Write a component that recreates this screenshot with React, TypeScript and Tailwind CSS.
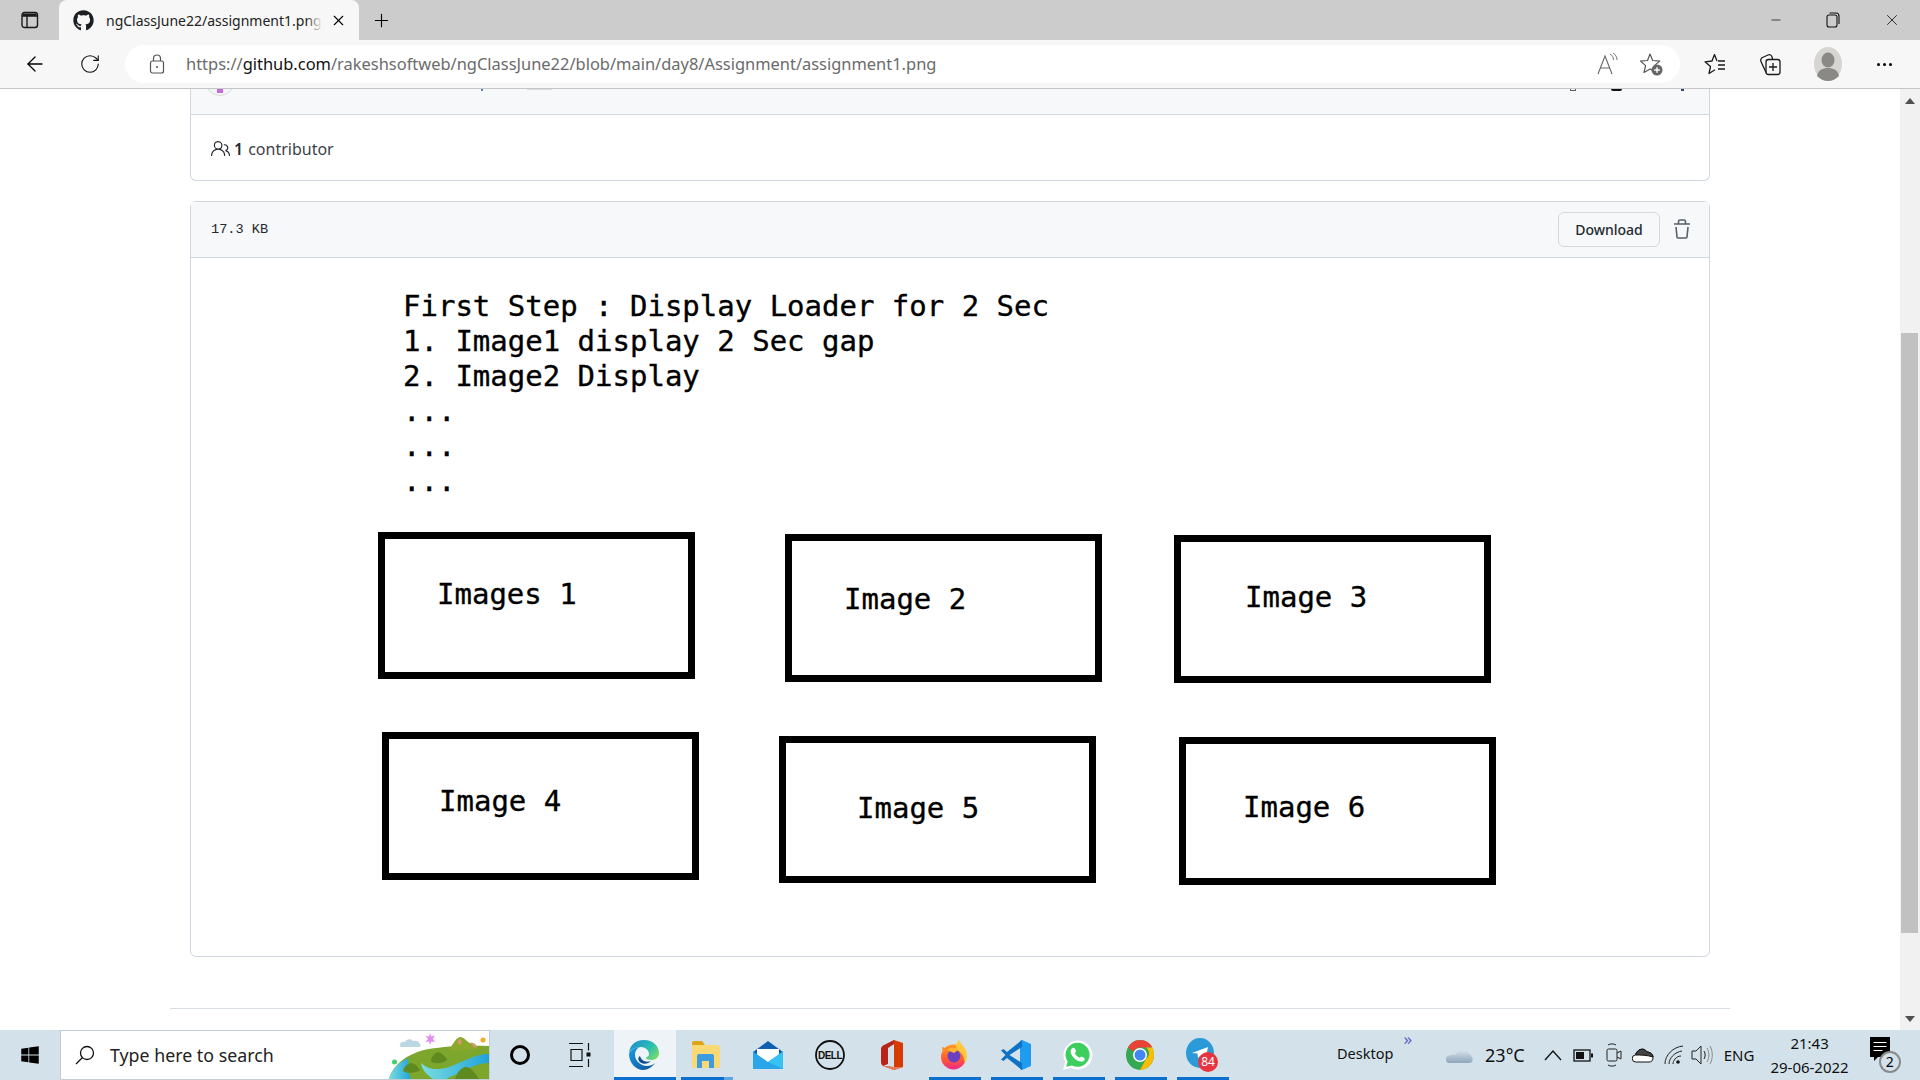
import { ArrowLeft, Minus, Plus, RotateCw, X } from "lucide-react";
import { FaGithub, FaWindows } from "react-icons/fa";
import { GoPeople } from "react-icons/go";

const ui = "font-['Noto_Sans','Open_Sans',sans-serif]";
const sketch = "font-['DejaVu_Sans_Mono',monospace] text-[29px] leading-[35px] text-black whitespace-pre [-webkit-text-stroke:0.35px_black]";

const boxes = [
  { label: "Images 1", place: "left-[187px] top-[274px] h-[147px] w-[317px] pl-[52px] pt-[38px]" },
  { label: "Image 2", place: "left-[594px] top-[276px] h-[148px] w-[317px] pl-[52px] pt-[41px]" },
  { label: "Image 3", place: "left-[983px] top-[277px] h-[148px] w-[317px] pl-[64px] pt-[38px]" },
  { label: "Image 4", place: "left-[191px] top-[474px] h-[148px] w-[317px] pl-[50px] pt-[45px]" },
  { label: "Image 5", place: "left-[588px] top-[478px] h-[147px] w-[317px] pl-[71px] pt-[48px]" },
  { label: "Image 6", place: "left-[988px] top-[479px] h-[148px] w-[317px] pl-[57px] pt-[46px]" },
];

function TabActionsIcon() {
  return (
    <svg width="18" height="18" viewBox="0 0 18 18" fill="none">
      <rect x="1" y="1.5" width="15.5" height="15" rx="2.5" stroke="#1a1a1a" strokeWidth="1.4" />
      <path d="M1 5h15.5M6 5v11" stroke="#1a1a1a" strokeWidth="1.4" />
      <path d="M2 2.5h13.5V5H2z" fill="#1a1a1a" />
    </svg>
  );
}

function LockIcon() {
  return (
    <svg width="16" height="20" viewBox="0 0 16 20" fill="none" stroke="#555" strokeWidth="1.2">
      <rect x="1.5" y="7" width="13" height="12" rx="2" />
      <path d="M4.5 7V4.5a3.5 3.5 0 0 1 7 0V7" />
      <circle cx="8" cy="13" r="1" fill="#555" stroke="none" />
    </svg>
  );
}

function ReadAloudIcon() {
  return (
    <svg width="22" height="22" viewBox="0 0 22 22" fill="none" stroke="#666" strokeWidth="1.1">
      <path d="M1 21 8 3l7 18M3.5 15h9" />
      <path d="M13 1c2 1 3.5 3 3.5 6M16 0c2.5 1.5 4 4 4 7" strokeWidth="0.9" />
    </svg>
  );
}

function StarPlusIcon() {
  return (
    <svg width="24" height="24" viewBox="0 0 24 24" fill="none">
      <path d="M10 2l2.7 6.5 7 .6-5.300 4.500 1.600 6.900-6-3.500-6 3.500 1.600-6.900L.5 9.100l7-.6z" stroke="#555" strokeWidth="1.2" strokeLinejoin="round" />
      <circle cx="17" cy="18" r="5.5" fill="#666" />
      <path d="M17 15.2v5.600M14.2 18h5.600" stroke="#fff" strokeWidth="1.4" />
    </svg>
  );
}

function FavoritesIcon() {
  return (
    <svg width="22" height="22" viewBox="0 0 22 22" fill="none" stroke="#1a1a1a" strokeWidth="1.3" strokeLinejoin="round">
      <path d="M11 16.8 5 20.500l1.500-7L1 8.800 8 8l2.500-6.500L13 8" />
      <path d="M14 8h7M14 12h7M14 16h7" />
    </svg>
  );
}

function CollectionsIcon() {
  return (
    <svg width="22" height="24" viewBox="0 0 22 24" fill="none" stroke="#1a1a1a" strokeWidth="1.3">
      <rect x="7" y="7.5" width="14" height="15" rx="2.5" />
      <path d="M14 11v8M10 15h8" />
      <path d="M7 20.5 2 9.500a3 3 0 0 1 1.500-4L9 3c2-.8 3.500.2 4 2l.6 2.500" />
    </svg>
  );
}

function ProfileIcon() {
  return (
    <svg width="28" height="34" viewBox="0 0 28 34">
      <ellipse cx="14" cy="17" rx="14" ry="17" fill="#d6d5d2" />
      <ellipse cx="14" cy="13" rx="6.5" ry="7.5" fill="#8a8986" />
      <path d="M3 29c1-6 6-8 11-8s10 2 11 8c-3 3-7 5-11 5s-8-2-11-5z" fill="#8a8986" />
    </svg>
  );
}

function TrashIcon() {
  return (
    <svg width="16" height="20" viewBox="0 0 16 20" fill="none" stroke="#57606a" strokeWidth="1.6">
      <path d="M0 5h16M4.5 4.500V2.500A1.500 1.500 0 0 1 6 1h4a1.500 1.500 0 0 1 1.500 1.500v2" />
      <path d="M2 8l1 10a1 1 0 0 0 1 1h8a1 1 0 0 0 1-1l1-10" />
    </svg>
  );
}

function SearchIcon() {
  return (
    <svg width="20" height="20" viewBox="0 0 20 20" fill="none" stroke="#111" strokeWidth="1.3">
      <circle cx="12" cy="8" r="6.5" />
      <path d="M7.5 12.500 1 19" />
    </svg>
  );
}

function Landscape() {
  return (
    <svg width="100" height="48" viewBox="0 0 100 48" className="shrink-0">
      <defs>
        <linearGradient id="riverGrad" x1="0" y1="0" x2="1" y2="0">
          <stop offset="0" stopColor="#7bdde0" />
          <stop offset="1" stopColor="#1fa3d8" />
        </linearGradient>
      </defs>
      <path d="M11 14c0-3 3-4 5-3 1-3 6-4 8-1 3-1 6 0 7 3 1 1 1 3-1 3H13c-2 0-3-1-2-2z" fill="#bcd6e4" />
      <path d="M41 2l1.500 3.500 3.500-1-2 3.500 2 3-3.500-.5L41 14l-1-3.500-3.500.5L39 8l-2.500-3 3.500.5z" fill="#e58ef0" />
      <circle cx="94" cy="9" r="2.5" fill="#fba91c" />
      <circle cx="5.5" cy="31" r="2.5" fill="#3fd06f" />
      <path d="M0 48c4-14 18-26 40-30 16-3 40-4 60-3v33z" fill="#7da62d" />
      <path d="M0 48c3-10 10-17 20-21-2 7-1 14 2 21z" fill="url(#riverGrad)" />
      <path d="M32 32c6 6 16 8 28 4 14-5 26-13 40-13v9c-12 0-22 6-32 11-7 3-8 3-10 5H44c-6-4-11-9-12-16z" fill="url(#riverGrad)" />
      <path d="M60 18c3-2 6-11 11-12 4 0 6 4 10 6l5 1 4 5c-8 1-24 3-30 0z" fill="#8aa82b" />
      <path d="M70 8c2-1 3 3 2 6l-4-2zM82 11l4 2 2 4-4-1z" fill="#d59a6a" />
      <path d="M42 30c0-3 3-8 7-9 3 1 8 4 9 8-3 3-12 5-16 1zM14 40c1-4 5-8 8-8 4 0 7 4 9 7-3 3-13 4-17 1zM66 48c2-6 6-12 11-12s9 6 13 12z" fill="#5f8a1f" />
    </svg>
  );
}

function TaskViewIcon() {
  return (
    <svg width="22" height="24" viewBox="0 0 22 24" fill="none" stroke="#111" strokeWidth="1.2">
      <path d="M0 .5h14M0 23.500h14M2 6.500h11v11H2zM19.500 0v7.500M19.500 16v8" />
      <rect x="17.5" y="9.5" width="4" height="4" fill="#111" stroke="none" />
    </svg>
  );
}

function EdgeIcon() {
  return (
    <svg width="32" height="32" viewBox="0 0 32 32">
      <defs>
        <linearGradient id="edgeTop" x1="0" y1="0.2" x2="1" y2="0.8">
          <stop offset="0" stopColor="#1d8fd0" />
          <stop offset="0.6" stopColor="#2bc0b0" />
          <stop offset="1" stopColor="#7fdc63" />
        </linearGradient>
        <linearGradient id="edgeLow" x1="0" y1="0" x2="1" y2="1">
          <stop offset="0" stopColor="#1b9de2" />
          <stop offset="1" stopColor="#0c4f9c" />
        </linearGradient>
      </defs>
      <path d="M1 15C1 7 7 1 16 1c9 0 15 6 15 13 0 4-3 7-7 7-3 0-6-1-6-2 0-1 3-1 3-4 0-4-4-7-8-7C7 8 1 11 1 15z" fill="url(#edgeTop)" />
      <path d="M1 15c1-4 6-7 11-7-3 1-5 4-5 8 0 6 6 11 12 11 3 0 6-1 8-3-3 4-7 7-12 7C8 31 1 24 1 15z" fill="url(#edgeLow)" />
      <path d="M12 17c1 4 5 7 11 5-3 3-9 4-12 0-1-2-1-4 1-5z" fill="#0b4a95" />
    </svg>
  );
}

function FilesIcon() {
  return (
    <svg width="28" height="28" viewBox="0 0 28 28">
      <path d="M0 2a2 2 0 0 1 2-2h8l3 4H0z" fill="#dba419" />
      <path d="M0 4h25a3 3 0 0 1 3 3v18a2 2 0 0 1-2 2H2a2 2 0 0 1-2-2z" fill="#fad974" />
      <path d="M5 27V15a2 2 0 0 1 2-2h13a2 2 0 0 1 2 2v12h-5v-7h-7v7z" fill="#3d9ce0" />
    </svg>
  );
}

function MailIcon() {
  return (
    <svg width="30" height="28" viewBox="0 0 30 28">
      <path d="M15 0 30 11v5H0v-5z" fill="#0f5fb0" />
      <path d="M4 8h22v10L15 24 4 18z" fill="#fff" />
      <path d="M0 10.5 15 21 30 10.500V28H0z" fill="#2aa5e8" />
      <path d="M15 21 30 10.500V28z" fill="#36c2f5" />
    </svg>
  );
}

function DellIcon() {
  return (
    <svg width="30" height="30" viewBox="0 0 30 30">
      <circle cx="15" cy="15" r="14" fill="none" stroke="#111" strokeWidth="1.8" />
      <text x="15" y="18.5" textAnchor="middle" fontFamily="Liberation Sans" fontWeight="700" fontSize="10" letterSpacing="-0.5" fill="#111">DELL</text>
    </svg>
  );
}

function OfficeIcon() {
  return (
    <svg width="22" height="30" viewBox="0 0 22 30">
      <path d="M13 0 22 3v24l-9 3-11-4 11 1V4L6 7z" fill="#d83b01" />
      <path d="M13 0 3 5c-2 1-3 2-3 4v13c0 2 1 3 2 4l5-2V8l6-4z" fill="#b7251a" />
      <path d="M2 26 13 30l9-3-9 0z" fill="#e8795a" />
    </svg>
  );
}

function FirefoxIcon() {
  return (
    <svg width="30" height="30" viewBox="0 0 30 30">
      <defs>
        <linearGradient id="foxBody" x1="0.5" y1="0" x2="0.5" y2="1">
          <stop offset="0" stopColor="#ff9a1f" />
          <stop offset="0.6" stopColor="#ff5a34" />
          <stop offset="1" stopColor="#f0268c" />
        </linearGradient>
      </defs>
      <circle cx="14.5" cy="17" r="12.5" fill="url(#foxBody)" />
      <path d="M20 0c1 4 8 7 8 16 0 3-1 5-2 7-1-5-2-9-6-12-2-1-3-3-3-5 0-3 2-4 3-6z" fill="#ffc83d" />
      <path d="M3 7l1 6 6-4z" fill="#ff8a1f" />
      <circle cx="15" cy="16" r="6.5" fill="#6a3fc0" />
      <path d="M8 10c3-3 8-3 11 0l-4 3z" fill="#ffb52e" />
    </svg>
  );
}

function VsCodeIcon() {
  return (
    <svg width="30" height="30" viewBox="0 0 30 30">
      <path d="M21 0 30 4v22l-9 4-2-1V1z" fill="#1f9cf0" />
      <path d="M21 0v7L8.500 15 21 23v7L6 18l-3.500 3L0 19.500 4.500 15 0 10.500 2.500 9 6 12z" fill="#0f72c4" />
    </svg>
  );
}

function WhatsAppIcon() {
  return (
    <svg width="30" height="30" viewBox="0 0 30 30">
      <path d="M0 30l2.200-8A14.500 14.500 0 1 1 8 27.800z" fill="#fff" />
      <path d="M3.200 26.800l1.500-5.200A12 12 0 1 1 9 25.400z" fill="#3ccf5e" />
      <path d="M10.500 8c.8 0 1.200 0 1.500.8l1 2.500c.2.500-.8 1.500-1.200 2 1 2 3 3.800 5 4.700.5-.5 1.300-1.600 1.800-1.400l2.600 1.300c.6.300.6.800.4 1.500-.4 1.500-2 2.300-3.500 2.200-5.500-.8-9.500-5-10.500-9.600-.2-1.800.8-4 2.900-4.500z" fill="#fff" />
    </svg>
  );
}

function ChromeIcon() {
  return (
    <svg width="28" height="30" viewBox="0 0 28 30">
      <ellipse cx="14" cy="15" rx="14" ry="15" fill="#34a853" />
      <path d="M2 7.500C4.500 3 9 0 14 0c5.500 0 10.500 3 12.500 7.500H14a7 7 0 0 0-6.500 4z" fill="#ea4335" />
      <path d="M26.500 7.500C27.500 9.500 28 12 28 15c0 8-6 15-14 15l6-11a7 7 0 0 0 0-11.500z" fill="#fbbc04" />
      <circle cx="14" cy="15" r="7" fill="#fff" />
      <circle cx="14" cy="15" r="5.5" fill="#4285f4" />
    </svg>
  );
}

function TelegramIcon() {
  return (
    <div className="relative h-[34px] w-[32px]">
      <svg width="28" height="30" viewBox="0 0 28 30" className="absolute left-0 top-0">
        <ellipse cx="14" cy="15" rx="14" ry="15" fill="#2a9bd8" />
        <path d="M6 15 22 9l-2.500 12-5-3.500-2.500 2.500-.5-4.500z" fill="#fff" />
      </svg>
      <span className="absolute right-0 bottom-0 flex h-[20px] w-[20px] items-center justify-center rounded-full bg-[#e9343f] font-['Noto_Sans',sans-serif] text-[12px] leading-none text-white">84</span>
    </div>
  );
}

function WeatherCloud() {
  return (
    <svg width="27" height="17" viewBox="0 0 28 18">
      <defs>
        <linearGradient id="cloudGrad" x1="0" y1="0" x2="0" y2="1">
          <stop offset="0" stopColor="#d3dfe8" />
          <stop offset="1" stopColor="#8ea6bb" />
        </linearGradient>
      </defs>
      <path d="M4 17a4 4 0 0 1-1-8c2-1 5-1 7-1 2-5 10-6 13-2 3 2 5 5 5 7 0 3-2 4-4 4z" fill="url(#cloudGrad)" />
    </svg>
  );
}

function TrayIcons() {
  return (
    <>
      <svg width="18" height="12" viewBox="0 0 18 12" fill="none" stroke="#111" strokeWidth="1.3" className="ml-[19px]"><path d="M1 11 9 2l8 9" /></svg>
      <svg width="20" height="13" viewBox="0 0 20 13" fill="none" className="ml-[11px]"><rect x="1" y="1" width="16" height="11" stroke="#111" strokeWidth="1.3" /><rect x="3" y="3" width="8" height="7" fill="#111" /><rect x="18" y="4.5" width="2" height="4" fill="#111" /></svg>
      <svg width="16" height="24" viewBox="0 0 16 24" fill="none" stroke="#222" strokeWidth="1" className="ml-[13px]"><path d="M2 2c2-1.500 6-1.500 8 0M2 22c2 1.500 6 1.500 8 0" /><rect x="1" y="6" width="10" height="12" rx="1.5" /><path d="M11 10l4-2v8l-4-2" /></svg>
      <svg width="22" height="16" viewBox="0 0 22 16" fill="#444" stroke="#111" strokeWidth="1" className="ml-[10px]"><path d="M4 15a3.500 3.500 0 0 1-.5-7C5 2 12 0 15 5c3 0 6 2 6 6 0 3-2 4-4 4z" fill="#fff" /><path d="M3.500 8C5 2 12 0 15 5c3 0 6 2 6 5-6-2-12-2-17.500-2z" /></svg>
      <svg width="20" height="20" viewBox="0 0 20 20" fill="none" stroke="#222" strokeWidth="1" className="ml-[10px]"><path d="M1 19C1 10 9 2 19 1M5 19c0-6 6-12 13-13M9 19c0-3 3-8 8-8" /><circle cx="14" cy="17" r="1.8" fill="#111" stroke="none" /></svg>
      <svg width="22" height="22" viewBox="0 0 22 22" fill="none" stroke="#222" strokeWidth="1" className="ml-[7px]"><path d="M1 7h4l5-5v18l-5-5H1z" /><path d="M13 7c1.500 2.500 1.500 5.500 0 8" /><path d="M16 4c2.500 4 2.500 10 0 14M19 2c3 5 3 13 0 18" stroke="#888" /></svg>
    </>
  );
}

function NotificationIcon() {
  return (
    <div className="relative h-[36px] w-[32px]">
      <svg width="20" height="24" viewBox="0 0 20 24" className="absolute left-0 top-0">
        <path d="M0 0h20v20H8l-4 4v-4H0z" fill="#000" />
        <path d="M3.500 5.500h13M3.500 9.500h13M3.500 13.500h9" stroke="#fff" strokeWidth="1.2" />
      </svg>
      <span className="absolute bottom-0 right-[1px] flex h-[22px] w-[22px] items-center justify-center rounded-full border-2 border-[#8a8a8a] bg-[#d3e2ea] font-['Noto_Sans',sans-serif] text-[14px] leading-none text-black">2</span>
    </div>
  );
}

function TaskbarApp({ children, active, running, more, inset = "pr-[2px]" }: { children: React.ReactNode; active?: boolean; running?: boolean; more?: boolean; inset?: string }) {
  return (
    <div className={`relative flex h-full w-[62px] items-center justify-center ${inset} ${active ? "bg-[#edf3f6]" : ""}`}>
      {children}
      {running && (
        <div className="absolute bottom-0 left-[5px] right-[5px] flex h-[3px]">
          <div className="flex-1 bg-[#0a6fcf]" />
          {more && <div className="w-[9px] bg-[#5fa5e2]" />}
        </div>
      )}
      {active && <div className="absolute bottom-0 left-0 right-0 h-[3px] bg-[#0a6fcf]" />}
    </div>
  );
}

export default function App() {
  return (
    <div className={`flex h-screen w-full flex-col overflow-hidden bg-white ${ui}`}>
      {/* browser frame */}
      <div className="flex h-[40px] shrink-0 items-stretch bg-[#cccccc]">
        <div className="flex w-[59px] items-center justify-center">
          <TabActionsIcon />
        </div>
        <div className="flex w-[300px] items-center rounded-t-[8px] bg-[#f7f7f7] pl-[14px]">
          <FaGithub className="text-[21px] text-[#1b1f23]" />
          <div className="relative ml-[12px] w-[216px] overflow-hidden whitespace-nowrap text-[14px] text-[#222]">
            ngClassJune22/assignment1.png
            <div className="absolute inset-y-0 right-0 w-[16px] bg-gradient-to-r from-transparent to-[#f7f7f7]" />
          </div>
          <X size={17} strokeWidth={1.6} className="ml-[8px] text-black" />
        </div>
        <div className="ml-[12px] flex items-center">
          <Plus size={21} strokeWidth={1.3} className="text-black" />
        </div>
        <div className="ml-auto flex items-center gap-[43px] pr-[19px]">
          <Minus size={14} strokeWidth={1.2} className="text-black" />
          <svg width="14" height="16" viewBox="0 0 14 16" fill="none" stroke="#111" strokeWidth="1.1"><rect x="1" y="3" width="10" height="12" rx="2" /><path d="M3.500 1H10a3 3 0 0 1 3 3v8" /></svg>
          <X size={18} strokeWidth={1} className="text-black" />
        </div>
      </div>
      <div className="flex h-[49px] shrink-0 items-center border-b border-[#c6c6c6] bg-[#f7f7f7]">
        <ArrowLeft size={24} strokeWidth={1.3} className="ml-[23px] text-black" />
        <RotateCw size={22} strokeWidth={1.2} className="ml-[32px] text-[#111]" />
        <div className="ml-[24px] flex h-[38px] w-[1555px] items-center rounded-full bg-white pl-[24px] pr-[16px]">
          <LockIcon />
          <span className="ml-[21px] whitespace-nowrap text-[16.45px] text-[#6b6b6b]">
            https://<span className="text-[#111]">github.com</span>/rakeshsoftweb/ngClassJune22/blob/main/day8/Assignment/assignment1.png
          </span>
          <div className="ml-auto flex items-center gap-[21px]">
            <ReadAloudIcon />
            <StarPlusIcon />
          </div>
        </div>
        <div className="ml-[24px]"><FavoritesIcon /></div>
        <div className="ml-[33px]"><CollectionsIcon /></div>
        <div className="ml-[33px]"><ProfileIcon /></div>
        <div className="ml-[35px] flex gap-[3px]">
          <div className="h-[3px] w-[3px] rounded-full bg-black" />
          <div className="h-[3px] w-[3px] rounded-full bg-black" />
          <div className="h-[3px] w-[3px] rounded-full bg-black" />
        </div>
      </div>

      {/* page */}
      <div className="flex min-h-0 flex-1">
        <main className="w-[1900px] px-[190px]">
          <section className="rounded-b-[6px] border border-t-0 border-[#d0d7de]">
            <div className="relative h-[26px] overflow-hidden border-b border-[#d0d7de] bg-[#f6f8fa]">
              <div className="absolute -top-[23px] left-[14px] flex h-[30px] w-[30px] items-end justify-center rounded-full border border-[#dcdcdc] bg-[#f3f4f6] pb-[2px]">
                <div className="h-[5px] w-[6px] bg-[#c56bdc]" />
              </div>
              <div className="absolute left-[290px] top-0 h-[2px] w-[2px] bg-[#5b7fa8]" />
              <div className="absolute left-[336px] top-0 h-[1px] w-[25px] bg-[#d8dbe0]" />
              <div className="absolute left-[1379px] top-0 h-[2px] w-[6px] rounded-b-[1px] border-x border-b border-[#57606a]" />
              <div className="absolute left-[1420px] top-0 h-[2px] w-[11px] rounded-b-full bg-[#111]" />
              <div className="absolute left-[1490px] top-0 h-[2px] w-[3px] bg-[#33476a]" />
            </div>
            <div className="flex h-[65px] items-center pl-[20px] pt-[2px] text-[16px] text-[#24292f]">
              <GoPeople size={19} className="text-[#24292f]" />
              <span className="ml-[4px] font-semibold">1</span>
              <span className="ml-[5px] text-[#3b4148]">contributor</span>
            </div>
          </section>

          <section className="mt-[20px] rounded-[6px] border border-[#d0d7de]">
            <div className="flex h-[56px] items-center justify-between border-b border-[#d0d7de] bg-[#f6f8fa] px-[19px]">
              <span className="ml-[1px] pt-[2px] font-['Liberation_Mono',monospace] text-[13.6px] text-[#24292f]">17.3 KB</span>
              <div className="flex items-center gap-[14px]">
                <button className="h-[35px] w-[102px] rounded-[6px] border border-[#d5d9de] bg-[#f6f8fa] text-[14px] font-medium text-[#24292f]">Download</button>
                <div className="mb-[2px]"><TrashIcon /></div>
              </div>
            </div>
            {/* hand-drawn assignment sketch */}
            <div className="relative h-[698px]">
              <div className={`absolute left-[212px] top-[31px] ${sketch}`}>
                {"First Step : Display Loader for 2 Sec\n1. Image1 display 2 Sec gap\n2. Image2 Display\n...\n...\n..."}
              </div>
              {boxes.map((box) => (
                <div key={box.label} className={`absolute border-[7px] border-black bg-white ${box.place}`}>
                  <span className={sketch}>{box.label}</span>
                </div>
              ))}
            </div>
          </section>

          <hr className="-mx-[20px] mt-[51px] border-t border-[#d8dee4]" />
        </main>

        <aside className="flex w-[20px] flex-col bg-[#f1f1f1]">
          <div className="flex h-[244px] justify-center pt-[9px]">
            <div className="h-0 w-0 border-x-[5px] border-b-[6px] border-x-transparent border-b-[#505050]" />
          </div>
          <div className="ml-[1px] h-[600px] w-[17px] bg-[#c1c1c1]" />
          <div className="mt-auto flex justify-center pb-[8px]">
            <div className="h-0 w-0 border-x-[5px] border-t-[6px] border-x-transparent border-t-[#505050]" />
          </div>
        </aside>
      </div>

      {/* windows taskbar */}
      <footer className="flex h-[50px] shrink-0 items-center bg-[#d3e2ea] text-[#111]">
        <div className="flex w-[60px] justify-center">
          <FaWindows size={20} className="text-black" />
        </div>
        <div className="flex h-full w-[430px] items-center overflow-hidden border border-[#c5cdd2] bg-white pl-[14px]">
          <SearchIcon />
          <span className="ml-[15px] text-[17.8px] text-[#222]">Type here to search</span>
          <div className="ml-auto self-end"><Landscape /></div>
        </div>
        <TaskbarApp>
          <div className="h-[20px] w-[20px] rounded-full border-[3px] border-black" />
        </TaskbarApp>
        <TaskbarApp inset="pr-[6px]"><TaskViewIcon /></TaskbarApp>
        <TaskbarApp active><EdgeIcon /></TaskbarApp>
        <TaskbarApp running more><FilesIcon /></TaskbarApp>
        <TaskbarApp><MailIcon /></TaskbarApp>
        <TaskbarApp><DellIcon /></TaskbarApp>
        <TaskbarApp><OfficeIcon /></TaskbarApp>
        <TaskbarApp running><FirefoxIcon /></TaskbarApp>
        <TaskbarApp running><VsCodeIcon /></TaskbarApp>
        <TaskbarApp running><WhatsAppIcon /></TaskbarApp>
        <TaskbarApp running><ChromeIcon /></TaskbarApp>
        <TaskbarApp running><TelegramIcon /></TaskbarApp>

        <span className="mb-[2px] ml-[103px] text-[14.5px]">Desktop</span>
        <span className="mb-[34px] ml-[10px] text-[17px] leading-none text-[#5b5fc7]">»</span>
        <div className="ml-[34px]"><WeatherCloud /></div>
        <span className="ml-[12px] text-[18px]">23°C</span>
        <TrayIcons />
        <span className="ml-[11px] text-[15px]">ENG</span>
        <div className="ml-[16px] flex flex-col items-center text-[15px] leading-[24px]">
          <span>21:43</span>
          <span>29-06-2022</span>
        </div>
        <div className="ml-[21px]"><NotificationIcon /></div>
      </footer>
    </div>
  );
}
